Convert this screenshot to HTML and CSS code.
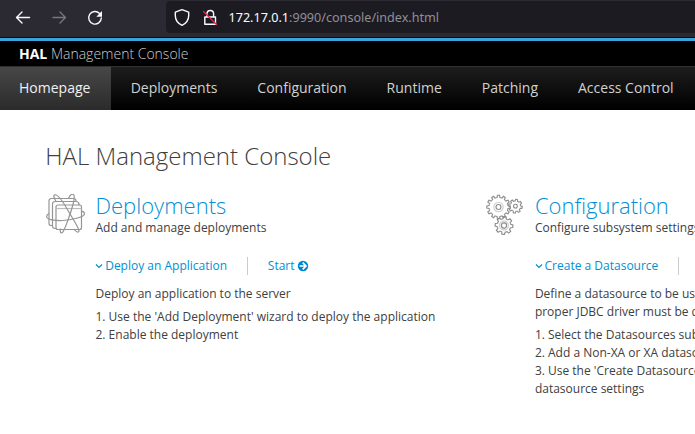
FILE: index.html
```html
<!DOCTYPE html>
<html lang="en">
<head>
<meta charset="utf-8">
<title>HAL Management Console</title>
<link rel="stylesheet" href="styles.css">
</head>
<body>
<div class="toolbar">
  <svg class="controls" viewBox="0 0 112 37" fill="none" stroke="#fbfbfe" stroke-width="1.4" stroke-linecap="round" stroke-linejoin="round">
    <path d="M29.500 17.500H17M22 12l-5.500 5.500L22 23"/>
    <path stroke="#77767e" d="M53 17.500h12.500M60 12l5.500 5.500L60 23"/>
    <path d="M99.600 13.500A6.300 6.300 0 1 0 101.300 18"/>
    <path fill="#fbfbfe" stroke="none" d="M102 11v5.700h-5.700z"/>
  </svg>
  <div class="address">
    <svg class="security" viewBox="0 0 54 32" fill="none" stroke="#fbfbfe" stroke-width="1.400" stroke-linejoin="round" stroke-linecap="round">
      <path d="M16 8.700l6.700 2.500v3.300c0 4.300-2.400 7.800-6.700 9.800-4.300-2-6.700-5.500-6.700-9.800v-3.300z"/>
      <path d="M38.800 16h10.700v7.300H38.800zM41 15.800v-3a3.300 3.300 0 0 1 6.600 0v3"/>
      <path stroke="#e2264d" d="M37.500 10.500l13 13"/>
    </svg>
    <div class="url"><b>172.17.0.1</b>:9990/console/index.html</div>
  </div>
</div>
<header class="brand"><strong>HAL</strong>&nbsp;<span>Management Console</span></header>
<nav class="tabs">
  <a class="active">Homepage</a>
  <a>Deployments</a>
  <a>Configuration</a>
  <a>Runtime</a>
  <a>Patching</a>
  <a>Access Control</a>
</nav>
<main>
  <h1>HAL Management Console</h1>
  <div class="columns">
    <section>
      <svg class="icon" viewBox="0 0 40 42" fill="none" stroke="#959595" stroke-width="1.200">
        <path d="M6.500 31.500H5q-2 0-2-2V7q0-2.500 2.500-2.500h22Q30 4.500 30 7v1M10 34.500H9q-2.500 0-2.500-2.500V10q0-2.500 2.500-2.500h21q3 0 3 3v1"/>
        <rect x="10" y="11" width="25.500" height="24.500" rx="2"/>
        <path stroke="#bbb" d="M10 14.500h25.500"/>
        <path d="M10.500 8C7.500 3.500 7 1.200 9 .8c3-.5 8 7 13 15.700s10.500 17 11 20c.3 2.500-3 2-5-1.500"/>
        <path d="M22.500 4.500C24 1 26-.5 27.500.5c1.700 1.500.8 5-.5 10-1.200 4.500-3 10-5 15.500-2.300 6-4 11-5.500 12.500-2 1.200-2.600-.7-2-4"/>
        <path d="M3 19.500C1 20.500.5 21.500.7 23c.3 2.500 8 3.800 16 3.500S38.500 23 38.500 20c0-1.500-1-2.500-2.500-2.700"/>
      </svg>
      <div class="body">
        <h2>Deployments</h2>
        <p class="sub">Add and manage deployments</p>
        <div class="links"><a class="toggle"><svg viewBox="0 0 8 8"><path d="M1 2.500l3 3 3-3"/></svg><span>Deploy an Application</span></a><a class="start"><span>Start</span> <svg viewBox="0 0 12 12"><circle cx="6" cy="6" r="5.200"/><path d="M2.500 6h6M5.700 2.700L9 6 5.700 9.300"/></svg></a></div>
        <p class="text">Deploy an application to the server</p>
        <ol><li>1. Use the 'Add Deployment' wizard to deploy the application</li><li>2. Enable the deployment</li></ol>
      </div>
    </section>
    <section>
      <svg class="icon" viewBox="-1 -.5 40 42" fill="none" stroke="#8c8c8c" stroke-width="1.100">
        <defs>
          <path id="big" d="M-2.460-9.170L-1.400-9.400-1.100-11.700H1.100L1.400-9.400 2.460-9.170"/>
          <path id="small" d="M-2-4.830L-1.300-5.100-1-6.800H1L1.300-5.100 2-4.830"/>
          <g id="two"><use href="#small"/><use href="#small" transform="rotate(45)"/></g>
          <g id="ring"><use href="#two"/><use href="#two" transform="rotate(90)"/><use href="#two" transform="rotate(180)"/><use href="#two" transform="rotate(270)"/></g>
          <g id="three"><use href="#big"/><use href="#big" transform="rotate(30)"/><use href="#big" transform="rotate(60)"/></g>
        </defs>
        <g transform="translate(12.500 12.500)"><use href="#three"/><use href="#three" transform="rotate(90)"/><use href="#three" transform="rotate(180)"/><use href="#three" transform="rotate(270)"/><circle r="2.500"/><circle r="4.700" stroke="#ccc"/></g>
        <g transform="translate(29.400 11.700) rotate(10)"><use href="#ring"/><circle r="1.900"/></g>
        <g transform="translate(18 31) scale(1.300) rotate(5)" stroke-width=".9"><use href="#ring"/><circle r="2"/><circle r="3.400" stroke="#ccc"/></g>
      </svg>
      <div class="body">
        <h2>Configuration</h2>
        <p class="sub">Configure subsystem settings</p>
        <div class="links"><a class="toggle"><svg viewBox="0 0 8 8"><path d="M1 2.500l3 3 3-3"/></svg><span>Create a Datasource</span></a></div>
        <p class="text">Define a datasource to be used by<br>proper JDBC driver must be deployed</p>
        <ol><li>1. Select the Datasources subsystem</li><li>2. Add a Non-XA or XA datasource</li><li>3. Use the 'Create Datasource' wizard<br>datasource settings</li></ol>
      </div>
    </section>
  </div>
</main>
</body>
</html>
```
FILE: styles.css
```css
* { box-sizing: border-box; }
html, body { margin: 0; height: 100%; overflow: hidden; }
body { background: #fff; color: #404040; font: 12px/18px "Open Sans", "Noto Sans", sans-serif; }
h1, h2, p, ol { margin: 0; padding: 0; }
svg { display: block; flex: none; }
.toolbar { height: 38px; background: #2b2a33; border-bottom: 1px solid #0c0c0d; display: flex; padding: 1px 0 0 0; }
.controls { width: 112px; height: 37px; margin-top: -1px; }
.address { margin-left: 54px; flex: 1; height: 32px; background: #1c1b22; border-radius: 4px 0 0 4px; display: flex; align-items: center; }
.security { width: 54px; height: 32px; }
.url { margin-left: 8.500px; padding-top: 2px; font: 12.600px/30px "Noto Sans", sans-serif; color: #8f8f96; white-space: nowrap; }
.url b { font-weight: 400; color: #fbfbfe; }
.brand { height: 28px; background: #000; border-top: 3px solid #39a5dc; padding-left: 19px; font-size: 14px; line-height: 26px; color: #ccc; font-weight: 300; }
.brand strong { font-weight: 700; color: #fff; }
.tabs { height: 44px; display: flex; border-top: 1px solid #303030; background: linear-gradient(#1d1d1d, #000); font-size: 14px; line-height: 42px; color: #d1d1d1; }
.tabs a { padding: 0 20px; white-space: nowrap; }
.tabs .active { width: 110.700px; padding: 0 0 0 19px; color: #f1f1f1; background: linear-gradient(#474747, #2b2b2b); }
main { padding: 29px 0 0 45.300px; }
h1 { font-size: 24px; line-height: 34px; font-weight: 300; }
.columns { display: grid; grid-template-columns: 439.400px minmax(0, 1fr); margin-top: 19px; }
section { display: flex; }
.icon { width: 40px; height: 42px; margin: 2px 9.500px 0 .7px; }
.body { flex: 1; min-width: 0; white-space: nowrap; }
h2 { font-size: 22px; line-height: 26px; font-weight: 300; color: #0090d3; }
.sub { line-height: 18px; margin-top: 1px; }
.links { display: flex; color: #0090d3; margin-top: 20px; }
.toggle, .start { display: flex; align-items: center; }
.toggle { padding-right: 19.700px; border-right: 1px solid #ccc; }
.toggle svg { width: 8px; height: 8px; margin-right: 1.700px; fill: none; stroke: #0090d3; stroke-width: 1.200; }
.start { padding-left: 20px; }
.start svg { width: 12px; height: 12px; margin-left: 2.500px; fill: #0085cf; }
.start path { fill: none; stroke: #fff; stroke-width: 1.7; }
.text { margin-top: 10px; }
ol { list-style: none; margin-top: 5px; }
```
